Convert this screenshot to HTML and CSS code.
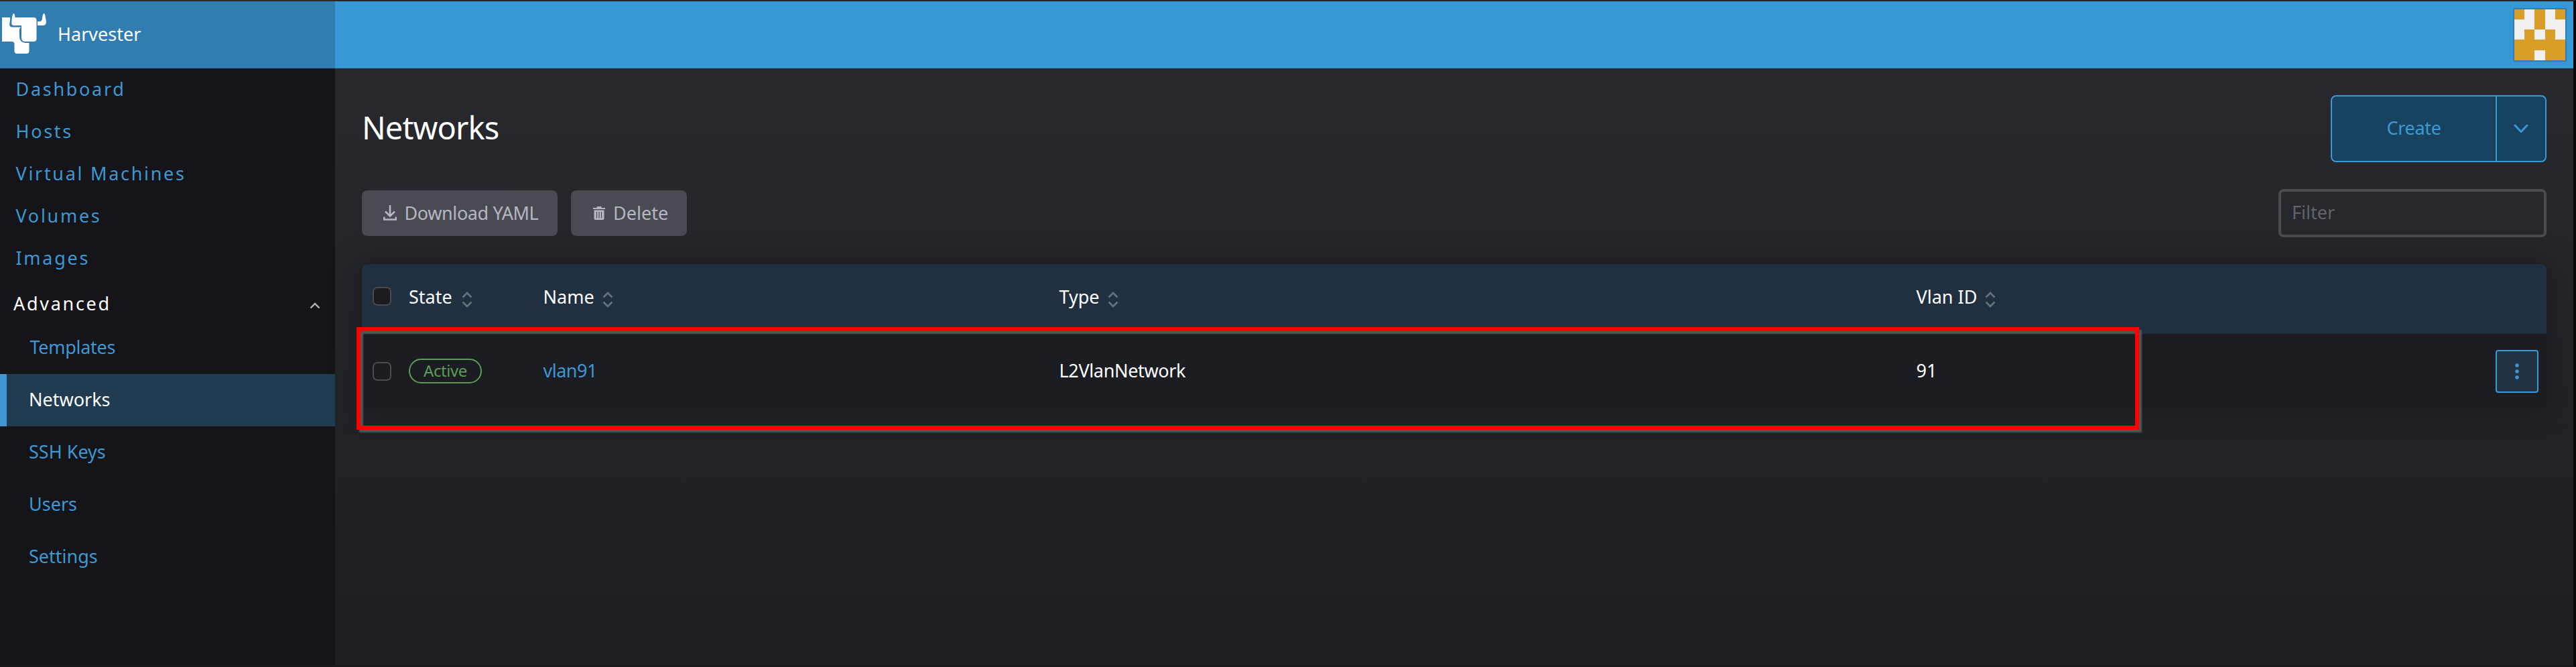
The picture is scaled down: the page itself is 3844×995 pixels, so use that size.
FILE: index.html
```html
<!DOCTYPE html>
<html lang="en">
<head>
<meta charset="utf-8">
<title>Harvester</title>
<link rel="stylesheet" href="styles.css">
</head>
<body>
<div class="app">
  <header class="topbar">
    <div class="brand">
      <svg class="logo" width="70" height="64" viewBox="0 0 70 64" fill="#fff">
        <path d="M3 8h11q1.500 0 1.200 3l-1 6.500q-.500 5 4.500 5H31q-2 1.500-2 5v8q0 10 8.500 10.500h6V58q0 4-4 4H25.500q-4 0-4-4V48q0-4-4-4H3z"/>
        <path d="M18 8Q19 2 20.500 2 22 2 22.500 8H50q4.500 0 4.500 4.500v27q0 4.500-4.500 4.500H37.500q-5.500 0-5.500-6V20H21q-4 0-3.800-4z"/>
        <path d="M56 14h3q4 0 4-5Q64 2 65.500 2 67 2 67.500 6L69 14q0 6-5 6h-8z"/>
      </svg>
      <span class="brand-name">Harvester</span>
    </div>
    <svg class="avatar" width="80" height="80" viewBox="0 0 80 80" shape-rendering="crispEdges">
      <path fill="#317eb1" d="M0 0h80v80H0z"/>
      <path fill="#d89e28" d="M2 2h76v76H2z"/>
      <path fill="#f0f0f0" d="M17 2h15v30H17zM48 2h15v30H48zM2 17h15v30H2zM63 17h15v30H63zM32 32h16v15H32zM32 63h16v15H32z"/>
    </svg>
  </header>
  <nav class="sidebar">
    <a class="item">Dashboard</a>
    <a class="item">Hosts</a>
    <a class="item">Virtual Machines</a>
    <a class="item">Volumes</a>
    <a class="item">Images</a>
    <div class="group"><span>Advanced</span>
      <svg width="16" height="10" viewBox="0 0 16 10" fill="none" stroke="#b6b6c2" stroke-width="2.400"><path d="M1.500 8.500 8 2l6.500 6.500"/></svg>
    </div>
    <a class="sub sub-t">Templates</a>
    <a class="sub active">Networks</a>
    <a class="sub">SSH Keys</a>
    <a class="sub">Users</a>
    <a class="sub">Settings</a>
  </nav>
  <main class="main">
    <div class="title-row">
      <h1>Networks</h1>
      <div class="create"><button class="create-label">Create</button><button class="create-more"><svg width="22" height="14" viewBox="0 0 22 14" fill="none" stroke="#3d98d3" stroke-width="3" stroke-linecap="round" stroke-linejoin="round"><path d="M2 2l9 9.500L20 2"/></svg></button></div>
    </div>
    <div class="tools">
      <button class="bulk download"><svg width="20" height="23" viewBox="0 0 20 23" fill="none" stroke="#b6b6c2" stroke-width="2.600"><path d="M10 0v16M3 9.500l7 7 7-7M1.200 17.500V21.500H18.800V17.500"/></svg>Download YAML</button>
      <button class="bulk delete"><svg width="18" height="20" viewBox="0 0 18 20"><path fill="#b6b6c2" d="M6 0h6l1 2h5v2H0V2h5zM1.500 5.500h15V18q0 2-2 2h-11q-2 0-2-2z"/><path stroke="#4a4a52" stroke-width="1.200" d="M5.500 8v9.500M9 8v9.500M12.500 8v9.500"/></svg>Delete</button>
      <input class="filter" placeholder="Filter">
    </div>
    <div class="table">
      <div class="row head">
        <span class="check"></span>
        <span class="c-state">State<svg class="sort" viewBox="0 0 16 24"><path d="M1.500 8.500 8 2l6.500 6.500M1.500 15.500 8 22l6.500-6.500"/></svg></span>
        <span class="c-name">Name<svg class="sort" viewBox="0 0 16 24"><path d="M1.500 8.500 8 2l6.500 6.500M1.500 15.500 8 22l6.500-6.500"/></svg></span>
        <span class="c-type">Type<svg class="sort" viewBox="0 0 16 24"><path d="M1.500 8.500 8 2l6.500 6.500M1.500 15.500 8 22l6.500-6.500"/></svg></span>
        <span class="c-vlan">Vlan ID<svg class="sort" viewBox="0 0 16 24"><path d="M1.500 8.500 8 2l6.500 6.500M1.500 15.500 8 22l6.500-6.500"/></svg></span>
      </div>
      <div class="row body">
        <span class="check"></span>
        <span class="c-state"><span class="badge">Active</span></span>
        <a class="c-name link">vlan91</a>
        <span class="c-type">L2VlanNetwork</span>
        <span class="c-vlan">91</span>
        <button class="actions"><svg width="8" height="26" viewBox="0 0 8 26" fill="#3d98d3"><circle cx="4" cy="4" r="2.700"/><circle cx="4" cy="13" r="2.700"/><circle cx="4" cy="22" r="2.700"/></svg></button>
      </div>
      <div class="highlight"></div>
    </div>
  </main>
</div>
</body>
</html>
```
FILE: styles.css
```css
* { box-sizing: border-box; }
body { margin: 0; background: #1b1c21; font-family: "Noto Sans", sans-serif; font-size: 27px; color: #fff; }
button, input { font: inherit; margin: 0; padding: 0; }
svg { display: block; flex: none; }
.app { display: grid; grid-template: 100px 891px / 500px 3340px; width: 3844px; height: 995px; border: solid #27292e; border-width: 2px 4px 2px 0; border-right-color: #08080a; border-bottom-color: #1a191e; overflow: hidden; }
.topbar { grid-column: 1 / 3; display: flex; justify-content: space-between; background: #3897d5; padding-right: 10px; }
.brand { width: 500px; height: 100px; background: #317db1; display: flex; }
.logo { margin-top: 16px; overflow: visible; }
.brand-name { margin-left: 16px; line-height: 98px; }
.avatar { margin-top: 10px; }
.sidebar { background: #151419; display: flex; flex-direction: column; }
.item { height: 63px; line-height: 62px; padding-left: 23.500px; color: #3d98d3; letter-spacing: 2.700px; }
.group { height: 63px; line-height: 55px; padding: 8px 22px 0 20px; letter-spacing: 2.700px; display: flex; justify-content: space-between; }
.group svg { margin-top: 26px; }
.sub { height: 78px; line-height: 76px; padding-left: 43px; color: #3d98d3; }
.sub-t { padding-left: 44.500px; letter-spacing: -.300px; }
.sub.active { background: #213c50; border-left: 10px solid #3d98d3; padding-left: 33px; color: #fff; }
.main { padding: 40px 40px 0; background: linear-gradient(#27292e, #222327 55%, #1d1e23); }
.title-row { display: flex; justify-content: space-between; height: 140px; }
h1 { margin: 0; font-size: 47px; font-weight: 400; line-height: 97px; letter-spacing: -.900px; }
.create { display: flex; width: 322px; height: 100px; border: 2px solid #3d98d3; border-radius: 8px; background: #184360; }
.create button { border: 0; background: none; color: #3d98d3; }
.create-label { width: 244px; padding-bottom: 3px; letter-spacing: -.300px; }
.create .create-more { flex: 1; display: flex; align-items: center; justify-content: center; border-left: 2px solid #3d98d3; }
.tools { display: flex; align-items: flex-start; gap: 20px; height: 112px; }
.bulk { display: flex; align-items: center; height: 68px; margin-top: 2px; border: 0; border-radius: 8px; background: #4a4a52; color: #b6b6c2; line-height: 64px; padding-bottom: 1px; }
.download { width: 292px; padding-left: 32px; gap: 11.500px; letter-spacing: -.400px; }
.delete { width: 173px; padding-left: 33px; gap: 12px; }
.filter { margin-left: auto; width: 400px; height: 72px; border: 4px solid #4a4a50; border-radius: 8px; background: #27282d; padding: 0 16px 3px; color: #fff; }
.filter::placeholder { color: #62626b; opacity: 1; }
.table { position: relative; width: 3260px; height: 215px; border-radius: 8px; background: #1c1d22; box-shadow: 0 0 40px rgba(20, 20, 24, .65); }
.row { display: grid; grid-template-columns: 54px 200.500px 770px 1279px 1fr 64px; padding: 0 12px 0 16px; align-items: start; }
.head { height: 104px; line-height: 98px; background: #203040; border-radius: 8px 8px 0 0; }
.head > span:not(.check) { display: flex; align-items: center; height: 98px; }
.body { height: 111px; line-height: 110px; }
.check { width: 28px; height: 28px; margin-top: 42px; border: 2px solid #4a4a50; border-radius: 7px; }
.head .check { margin-top: 34px; background: #1b1c21; }
.sort { width: 16px; height: 24px; margin: 8px 0 0 14px; fill: none; stroke: #66717d; stroke-width: 2.800; }
.c-name .sort, .c-type .sort, .c-vlan .sort { margin-left: 12px; }
.badge { display: block; width: 109px; height: 37px; margin-top: 37px; border: 2px solid #5b9c57; border-radius: 19px; color: #5b9c57; font-size: 24px; line-height: 32px; text-align: center; letter-spacing: -.400px; }
.link { color: #3d98d3; letter-spacing: -.500px; }
.body .c-type { letter-spacing: -.350px; }
.actions { width: 64px; height: 64px; margin-top: 24px; display: flex; align-items: center; justify-content: center; border: 2px solid #3d98d3; border-radius: 4px; background: #223344; }
.highlight { position: absolute; left: -8px; top: 94px; width: 2660px; height: 153px; border: 6px solid #f00; box-shadow: 4px 4px 2px #555, inset 4px 4px 2px #555; }
```
